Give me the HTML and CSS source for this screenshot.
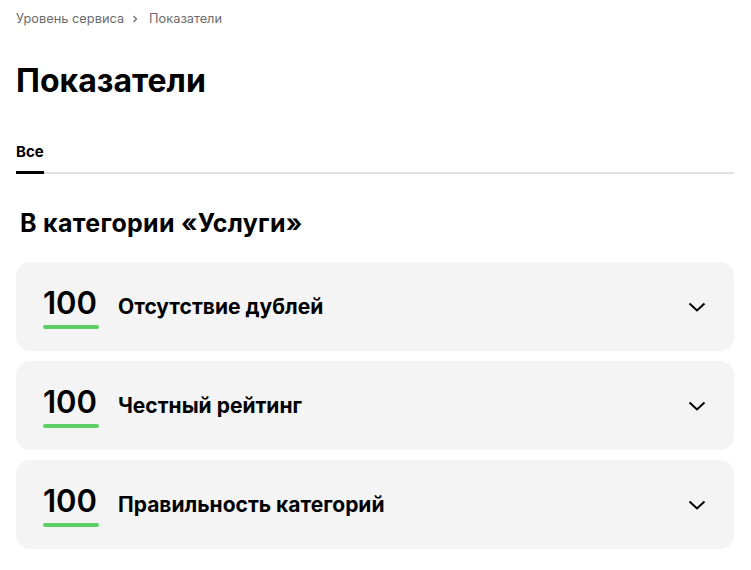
FILE: index.html
```html
<!DOCTYPE html>
<html lang="ru">
<head>
	<meta charset="UTF-8">
	<meta name="viewport" content="width=device-width, initial-scale=1.0">
	<title>Показатели</title>
	<link rel="stylesheet" href="styles.css">
</head>
<body>
	<div class="page">
		<nav class="crumbs">
			<a href="#">Уровень сервиса</a>
			<svg class="crumb-sep" width="8" height="8" viewBox="0 0 8 8"><path d="M2.5 1 L5.5 4 L2.5 7" fill="none" stroke="#6b6b6b" stroke-width="1.3"/></svg>
			<span>Показатели</span>
		</nav>

		<h1 class="title">Показатели</h1>

		<div class="tabs">
			<div class="tab active">Все</div>
		</div>

		<h2 class="section-title">В категории «Услуги»</h2>

		<div class="metrics">
			<div class="metric">
				<div class="score">
					<div class="score-value">100</div>
					<div class="score-bar"></div>
				</div>
				<div class="metric-name">Отсутствие дублей</div>
				<svg class="chevron" width="18" height="10" viewBox="0 0 18 10"><path d="M1.5 1.5 L9 8.5 L16.5 1.5" fill="none" stroke="#000" stroke-width="2"/></svg>
			</div>
			<div class="metric">
				<div class="score">
					<div class="score-value">100</div>
					<div class="score-bar"></div>
				</div>
				<div class="metric-name">Честный рейтинг</div>
				<svg class="chevron" width="18" height="10" viewBox="0 0 18 10"><path d="M1.5 1.5 L9 8.5 L16.5 1.5" fill="none" stroke="#000" stroke-width="2"/></svg>
			</div>
			<div class="metric">
				<div class="score">
					<div class="score-value">100</div>
					<div class="score-bar"></div>
				</div>
				<div class="metric-name">Правильность категорий</div>
				<svg class="chevron" width="18" height="10" viewBox="0 0 18 10"><path d="M1.5 1.5 L9 8.5 L16.5 1.5" fill="none" stroke="#000" stroke-width="2"/></svg>
			</div>
		</div>
	</div>
</body>
</html>
```

FILE: styles.css
```css
body {
	margin: 0;
	background: #fff;
	color: #000;
	font-family: Inter, "Noto Sans", sans-serif;
}

.page {
	padding: 11px 17px 20px 16px;
}

.crumbs {
	display: flex;
	align-items: center;
	gap: 7px;
	font-size: 12.8px;
	line-height: 16px;
	color: #6b6b6b;
}

.crumbs a {
	color: inherit;
	text-decoration: none;
}

.crumb-sep {
	margin-right: 3px;
}

.title {
	margin: 35px 0 0;
	font-size: 32px;
	line-height: 38px;
	font-weight: 700;
}

.tabs {
	display: flex;
	margin-top: 43px;
	border-bottom: 2px solid #e2e2e2;
}

.tab {
	font-size: 15px;
	font-weight: 700;
	line-height: 17px;
	padding-bottom: 11px;
	margin-bottom: -2px;
}

.tab.active {
	border-bottom: 3px solid #000;
}

.section-title {
	margin: 34px 0 0 4px;
	font-size: 25px;
	line-height: 30px;
	font-weight: 700;
	letter-spacing: 0.3px;
}

.metrics {
	display: flex;
	flex-direction: column;
	gap: 10px;
	margin-top: 24px;
}

.metric {
	display: flex;
	align-items: center;
	height: 89px;
	padding: 0 28px 0 27px;
	background: #f4f4f4;
	border-radius: 14px;
}

.score {
	display: flex;
	flex-direction: column;
	width: 56px;
	padding-top: 4px;
}

.score-value {
	font-size: 31px;
	line-height: 30px;
	font-weight: 600;
}

.score-bar {
	height: 4px;
	margin-top: 7px;
	border-radius: 2px;
	background: #5ccf66;
}

.metric-name {
	flex: 1;
	margin-left: 19px;
	font-size: 21px;
	font-weight: 700;
}

.chevron {
	flex: none;
}
```
